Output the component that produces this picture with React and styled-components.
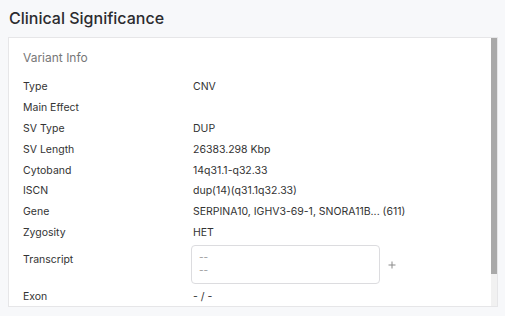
import React from 'react'
import styled, { createGlobalStyle } from 'styled-components'

const GlobalStyle = createGlobalStyle`
  html, body {
    margin: 0;
    padding: 0;
    background: #f7f8fa;
    font-family: Inter, "Noto Sans", sans-serif;
  }
`

const rows = [
  { label: 'Type', value: 'CNV' },
  { label: 'Main Effect', value: '' },
  { label: 'SV Type', value: 'DUP' },
  { label: 'SV Length', value: '26383.298 Kbp' },
  { label: 'Cytoband', value: '14q31.1-q32.33' },
  { label: 'ISCN', value: 'dup(14)(q31.1q32.33)' },
  { label: 'Gene', value: 'SERPINA10, IGHV3-69-1, SNORA11B... (611)' },
  { label: 'Zygosity', value: 'HET' },
]

const PlusIcon = () => (
  <svg width="8" height="8" viewBox="0 0 8 8">
    <path d="M4 0.5V7.5M0.5 4H7.5" stroke="#8a8a8a" strokeWidth="1" fill="none" />
  </svg>
)

const ClinicalSignificance = () => {
  return (
    <Page>
      <Heading>Clinical Significance</Heading>
      <Panel>
        <Content>
          <SectionTitle>Variant Info</SectionTitle>
          <List>
            {rows.map((row, index) => (
              <Row key={index}>
                <Label>{row.label}</Label>
                <Value>{row.value}</Value>
              </Row>
            ))}
            <Row tall>
              <Label pad>Transcript</Label>
              <TranscriptWrap>
                <TranscriptBox>
                  <Dash>--</Dash>
                  <Dash>--</Dash>
                </TranscriptBox>
                <AddButton><PlusIcon /></AddButton>
              </TranscriptWrap>
            </Row>
            <Row>
              <Label>Exon</Label>
              <Value>- / -</Value>
            </Row>
          </List>
        </Content>
        <ScrollTrack>
          <ScrollThumb />
        </ScrollTrack>
      </Panel>
    </Page>
  )
}

export default function App() {
  return (
    <>
      <GlobalStyle />
      <ClinicalSignificance />
    </>
  )
}

const Page = styled.div`
  width: 505px;
  height: 316px;
  padding: 0 7px 0 8px;
  box-sizing: border-box;
  display: flex;
  flex-direction: column;
`
const Heading = styled.h2`
  margin: 0;
  padding: 9px 0 0 1px;
  height: 37px;
  box-sizing: border-box;
  font-size: 16px;
  line-height: 19px;
  font-weight: 500;
  color: #2b2b2f;
`
const Panel = styled.div`
  height: 270px;
  background: #fff;
  border: 1px solid #e6e6e8;
  box-sizing: border-box;
  display: flex;
  overflow: hidden;
`
const Content = styled.div`
  flex: 1;
  overflow: hidden;
  padding: 0 14px;
`
const ScrollTrack = styled.div`
  width: 6px;
  flex: none;
  background: #f1f1f1;
  display: flex;
  flex-direction: column;
`
const ScrollThumb = styled.div`
  height: 236px;
  background: #a9a9a9;
`
const SectionTitle = styled.div`
  font-size: 12px;
  color: #777;
  height: 37px;
  line-height: 37px;
  margin-top: 1px;
`
const List = styled.div`
  display: flex;
  flex-direction: column;
`
const Row = styled.div`
  display: grid;
  grid-template-columns: 170px 1fr;
  align-items: ${p => (p.tall ? 'start' : 'center')};
  height: ${p => (p.tall ? 'auto' : '20.9px')};
`
const Label = styled.div`
  font-size: 10.5px;
  color: #333;
  line-height: 21px;
  padding-top: ${p => (p.pad ? '6px' : '0')};
`
const Value = styled.div`
  font-size: 10.5px;
  color: #333;
  line-height: 21px;
`
const TranscriptWrap = styled.div`
  display: flex;
  align-items: center;
  gap: 8px;
  margin: 2px 0 2px -2px;
`
const TranscriptBox = styled.div`
  width: 189px;
  height: 39px;
  box-sizing: border-box;
  border: 1px solid #dcdcdf;
  border-radius: 4px;
  padding: 5px 7px;
  display: flex;
  flex-direction: column;
`
const Dash = styled.div`
  font-size: 10px;
  line-height: 13px;
  color: #9a9a9a;
`
const AddButton = styled.span`
  display: flex;
  align-items: center;
  margin-top: 1px;
`
